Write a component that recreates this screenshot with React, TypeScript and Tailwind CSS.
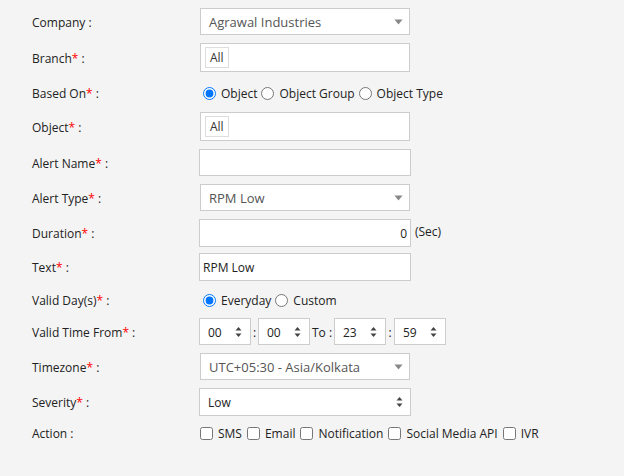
import React from 'react';

const font = { fontFamily: '"Open Sans", "Noto Sans", sans-serif' };

function Label({ text, req }: { text: string; req?: boolean }) {
  return (
    <div className="w-[168px] shrink-0 pl-[32px] pt-[2px] text-[12px] text-[#222]">
      {text}
      {req && <span className="text-[#ff0000]">*</span>}
      {' :'}
    </div>
  );
}

function Caret() {
  return (
    <svg width="9" height="6" viewBox="0 0 9 6" className="absolute right-[5px] top-1/2 -translate-y-1/2 mr-[1px]">
      <path d="M0.5 0.5 L8.5 0.5 L4.5 5.5 Z" fill="#888" />
    </svg>
  );
}

function UpDown({ className }: { className?: string }) {
  return (
    <svg width="7" height="11" viewBox="0 0 7 11" className={className}>
      <path d="M3.5 0.5 L6.5 4 L0.5 4 Z" fill="#444" />
      <path d="M0.5 7 L6.5 7 L3.5 10.5 Z" fill="#444" />
    </svg>
  );
}

function DropSelect({ value }: { value: string }) {
  return (
    <div className="relative ml-[32px] w-[210px] h-full bg-white border border-[#cccccc] flex items-center pl-[8px] pt-[2px] text-[13px] text-[#555]">
      {value}
      <Caret />
    </div>
  );
}

function ChipBox() {
  return (
    <div className="ml-[32px] w-[210px] h-full bg-white border border-[#cccccc] flex items-center pl-[4px]">
      <div className="h-[21px] px-[4px] pt-[1px] border border-[#dddddd] bg-white flex items-center text-[12px] text-[#333]">All</div>
    </div>
  );
}

function TextBox({ value, right }: { value?: string; right?: boolean }) {
  return (
    <div
      className={
        'ml-[31px] w-[212px] h-full bg-white border border-[#cccccc] flex items-center pt-[2px] text-[12px] text-[#222] ' +
        (right ? 'justify-end pr-[3px]' : 'pl-[3px]')
      }
    >
      {value}
    </div>
  );
}

function Spin({ value }: { value: string }) {
  return (
    <div className="relative w-[52px] shrink-0 h-full bg-white border border-[#cccccc] flex items-center pl-[8px] pt-[2px] text-[12px] text-[#222]">
      {value}
      <UpDown className="absolute right-[8px] top-1/2 -translate-y-1/2" />
    </div>
  );
}

function Radio({ label, checked }: { label: string; checked?: boolean }) {
  return (
    <label className="flex items-center gap-[5px] text-[12px] text-[#222] mr-[2px]">
      <input type="radio" name={label.startsWith('Object') ? 'based' : 'days'} defaultChecked={checked} className="m-0 w-[13px] h-[13px]" />
      <span className="pt-[2px]">{label}</span>
    </label>
  );
}

function Check({ label }: { label: string }) {
  return (
    <label className="flex items-center gap-[5px] text-[12px] text-[#222] mr-[5px]">
      <input type="checkbox" className="m-0 w-[13px] h-[13px]" />
      <span className="pt-[2px]">{label}</span>
    </label>
  );
}

export default function App() {
  return (
    <div className="w-[624px] h-[476px] bg-[#f4f4f4] pt-[8px] overflow-hidden" style={font}>
      <div className="flex items-center h-[27px]">
        <Label text="Company" />
        <DropSelect value="Agrawal Industries" />
      </div>

      <div className="flex items-center h-[29px] mt-[8px]">
        <Label text="Branch" req />
        <ChipBox />
      </div>

      <div className="flex items-center h-[26px] mt-[8px]">
        <Label text="Based On" req />
        <div className="ml-[35px] flex items-center gap-[2px]">
          <Radio label="Object" checked />
          <Radio label="Object Group" />
          <Radio label="Object Type" />
        </div>
      </div>

      <div className="flex items-center h-[29px] mt-[6px]">
        <Label text="Object" req />
        <ChipBox />
      </div>

      <div className="flex items-center h-[27px] mt-[8px]">
        <Label text="Alert Name" req />
        <TextBox />
      </div>

      <div className="flex items-center h-[27px] mt-[8px]">
        <Label text="Alert Type" req />
        <DropSelect value="RPM Low" />
      </div>

      <div className="flex items-center h-[28px] mt-[8px]">
        <Label text="Duration" req />
        <TextBox value="0" right />
        <span className="ml-[4px] -mt-[2px] text-[12px] text-[#222]">(Sec)</span>
      </div>

      <div className="flex items-center h-[28px] mt-[6px]">
        <Label text="Text" req />
        <TextBox value="RPM Low" />
      </div>

      <div className="flex items-center h-[24px] mt-[7px]">
        <Label text="Valid Day(s)" req />
        <div className="ml-[35px] flex items-center gap-[2px]">
          <Radio label="Everyday" checked />
          <Radio label="Custom" />
        </div>
      </div>

      <div className="flex items-center h-[27px] mt-[6px]">
        <Label text="Valid Time From" req />
        <div className="ml-[31px] h-full flex items-center text-[12px] text-[#222]">
          <Spin value="00" />
          <span className="w-[7px] shrink-0 pt-[2px] text-center">:</span>
          <Spin value="00" />
          <span className="w-[24px] shrink-0 pl-[2px] pt-[2px] whitespace-nowrap">To :</span>
          <Spin value="23" />
          <span className="w-[8px] shrink-0 pt-[2px] text-center">:</span>
          <Spin value="59" />
        </div>
      </div>

      <div className="flex items-center h-[27px] mt-[8px]">
        <Label text="Timezone" req />
        <DropSelect value="UTC+05:30 - Asia/Kolkata" />
      </div>

      <div className="flex items-center h-[28px] mt-[8px]">
        <Label text="Severity" req />
        <div className="relative ml-[31px] w-[212px] h-full bg-white border border-[#cccccc] flex items-center pl-[8px] pt-[2px] text-[12px] text-[#222]">
          Low
          <UpDown className="absolute right-[7px] top-1/2 -translate-y-1/2" />
        </div>
      </div>

      <div className="flex items-center h-[22px] mt-[6px]">
        <Label text="Action" />
        <div className="ml-[32px] flex items-center">
          <Check label="SMS" />
          <Check label="Email" />
          <Check label="Notification" />
          <Check label="Social Media API" />
          <Check label="IVR" />
        </div>
      </div>
    </div>
  );
}
